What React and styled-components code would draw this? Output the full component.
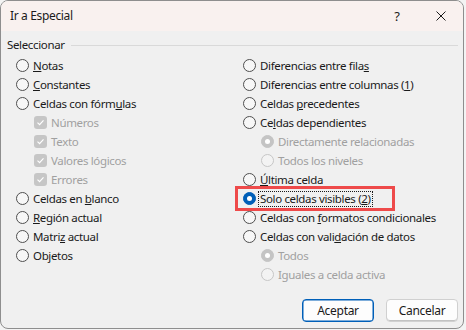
import React from "react";
import styled, { createGlobalStyle } from "styled-components";

const GlobalStyle = createGlobalStyle`
  html, body {
    margin: 0;
    padding: 0;
  }
  body {
    background: #f3f3f3;
    font-family: "Segoe UI", "Noto Sans", sans-serif;
    font-size: 11.5px;
    letter-spacing: -0.35px;
    color: #1a1a1a;
  }
`;

const Dialog = styled.div`
  position: relative;
  box-sizing: border-box;
  width: 464px;
  height: 329px;
  border: 1px solid #8e8e8e;
  border-radius: 8px;
  overflow: hidden;
  display: flex;
  flex-direction: column;
  background: #f0f0f0;
`;

const TitleBar = styled.div`
  height: 30px;
  display: flex;
  align-items: center;
  background: #f9f1ef;
`;

const Title = styled.div`
  flex: 1;
  padding-left: 9px;
  line-height: 30px;
  font-size: 12px;
  color: #1b1b1b;
`;

const TitleButton = styled.div`
  width: 44px;
  height: 30px;
  display: flex;
  align-items: center;
  justify-content: center;
  color: #1b1b1b;
  font-size: 13px;
`;

const Body = styled.div`
  flex: 1;
  display: flex;
  flex-direction: column;
  padding: 6px 5px 6px 6px;
`;

const Legend = styled.div`
  display: flex;
  align-items: center;
  gap: 6px;
  line-height: 16px;
`;

const LegendLine = styled.div`
  flex: 1;
  height: 1px;
  background: #d9d9d9;
`;

const Columns = styled.div`
  margin-top: 3px;
  padding-left: 9px;
  display: grid;
  grid-template-columns: 227px 1fr;
`;

const Column = styled.div`
  display: flex;
  flex-direction: column;
`;

const Row = styled.div`
  position: relative;
  height: 19px;
  display: flex;
  align-items: center;
  padding-left: ${(p) => (p.$indent ? 18 : 0)}px;
  color: ${(p) => (p.$disabled ? "#a0a0a0" : "#1a1a1a")};
`;

const Label = styled.span`
  margin-left: ${(p) => (p.$focused ? 2 : 4)}px;
  line-height: 14px;
  white-space: nowrap;
  border: ${(p) => (p.$focused ? "1px dotted #1a1a1a" : "none")};
  padding: ${(p) => (p.$focused ? "0 1px" : "0")};

  u {
    text-decoration-thickness: 1px;
    text-underline-offset: 1px;
  }
`;

const Highlight = styled.div`
  position: absolute;
  left: -8px;
  top: -3px;
  width: 160px;
  height: 25px;
  box-sizing: border-box;
  border: 3px solid #ee4a4a;
  pointer-events: none;
`;

const RadioCircle = styled.span`
  box-sizing: border-box;
  width: 13px;
  height: 13px;
  flex: none;
  border-radius: 50%;
  display: flex;
  align-items: center;
  justify-content: center;
  border: 1px solid
    ${(p) =>
      p.$checked ? (p.$disabled ? "#c4c4c4" : "#005fb8") : p.$disabled ? "#c6c6c6" : "#4f4f4f"};
  background: ${(p) =>
    p.$checked ? (p.$disabled ? "#c4c4c4" : "#005fb8") : p.$disabled ? "#f3f3f3" : "#f7f7f7"};

  &::after {
    content: "";
    display: ${(p) => (p.$checked ? "block" : "none")};
    width: 5px;
    height: 5px;
    border-radius: 50%;
    background: #ffffff;
  }
`;

const CheckBox = styled.span`
  box-sizing: border-box;
  width: 13px;
  height: 13px;
  flex: none;
  border-radius: 3px;
  background: #c6c6c6;
  display: flex;
  align-items: center;
  justify-content: center;
`;

const ButtonRow = styled.div`
  margin-top: auto;
  display: flex;
  justify-content: flex-end;
  gap: 12px;
`;

const Button = styled.button`
  box-sizing: border-box;
  width: 72px;
  height: 23px;
  padding: 0;
  font-family: inherit;
  font-size: 12px;
  letter-spacing: -0.3px;
  color: #1a1a1a;
  background: #fdfdfd;
  border-radius: 4px;
  border: 1px solid ${(p) => (p.$primary ? "#005fb8" : "#d0d0d0")};
  box-shadow: ${(p) => (p.$primary ? "inset 0 0 0 0.5px #005fb8" : "inset 0 -1px 0 #c2c2c2")};
`;

const Check = () => (
  <svg width="9" height="9" viewBox="0 0 9 9">
    <path d="M1.5 4.6 L3.6 6.6 L7.5 2.4" fill="none" stroke="#ffffff" strokeWidth="1.2" />
  </svg>
);

const Radio = ({ children, checked, disabled, indent, focused, highlight }) => (
  <Row $disabled={disabled} $indent={indent}>
    {highlight && <Highlight />}
    <RadioCircle $checked={checked} $disabled={disabled} />
    <Label $focused={focused}>{children}</Label>
  </Row>
);

const Option = ({ children }) => (
  <Row $disabled $indent>
    <CheckBox>
      <Check />
    </CheckBox>
    <Label>{children}</Label>
  </Row>
);

export default function App() {
  return (
    <>
      <GlobalStyle />
      <Dialog>
        <TitleBar>
          <Title>Ir a Especial</Title>
          <TitleButton>?</TitleButton>
          <TitleButton>
            <svg width="10" height="10" viewBox="0 0 10 10">
              <path d="M0.5 0.5 L9.5 9.5 M9.5 0.5 L0.5 9.5" stroke="#1b1b1b" strokeWidth="1" />
            </svg>
          </TitleButton>
        </TitleBar>
        <Body>
          <Legend>
            <span>Seleccionar</span>
            <LegendLine />
          </Legend>
          <Columns>
            <Column>
              <Radio><u>N</u>otas</Radio>
              <Radio><u>C</u>onstantes</Radio>
              <Radio>Celdas con fórm<u>u</u>las</Radio>
              <Option>Números</Option>
              <Option>Texto</Option>
              <Option>Valores lógicos</Option>
              <Option>Errores</Option>
              <Radio>Celdas en <u>b</u>lanco</Radio>
              <Radio><u>R</u>egión actual</Radio>
              <Radio>Matri<u>z</u> actual</Radio>
              <Radio>Ob<u>j</u>etos</Radio>
            </Column>
            <Column>
              <Radio>Diferencias entre fila<u>s</u></Radio>
              <Radio>Diferencias entre columnas (<u>1</u>)</Radio>
              <Radio>Celdas <u>p</u>recedentes</Radio>
              <Radio>Ce<u>l</u>das dependientes</Radio>
              <Radio checked disabled indent>Directamente relacionadas</Radio>
              <Radio disabled indent>Todos los niveles</Radio>
              <Radio><u>Ú</u>ltima celda</Radio>
              <Radio checked focused highlight>Solo celdas visibles (<u>2</u>)</Radio>
              <Radio>Celdas con <u>f</u>ormatos condicionales</Radio>
              <Radio>Celdas con vali<u>d</u>ación de datos</Radio>
              <Radio checked disabled indent>Todos</Radio>
              <Radio disabled indent>Iguales a celda activa</Radio>
            </Column>
          </Columns>
          <ButtonRow>
            <Button $primary>Aceptar</Button>
            <Button>Cancelar</Button>
          </ButtonRow>
        </Body>
      </Dialog>
    </>
  );
}
